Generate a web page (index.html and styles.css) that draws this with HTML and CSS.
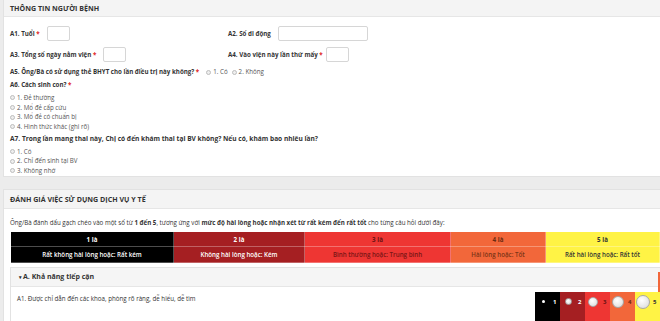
FILE: index.html
```html
<!DOCTYPE html>
<html lang="vi">
<head>
<meta charset="UTF-8">
<meta name="viewport" content="width=device-width, initial-scale=1.0">
<title>Khảo sát hài lòng người bệnh</title>
<link rel="stylesheet" href="styles.css">
</head>
<body>
    <div class="page">
        <div class="panel">
            <div class="panel-heading">THÔNG TIN NGƯỜI BỆNH</div>
            <div class="panel-body">
                <div class="field-grid">
                    <div class="field">
                        <label>A1. Tuổi <span class="req">*</span></label>
                        <input type="text" class="input-xs">
                    </div>
                    <div class="field">
                        <label>A2. Số di động</label>
                        <input type="text" class="input-lg">
                    </div>
                    <div class="field">
                        <label>A3. Tổng số ngày nằm viện <span class="req">*</span></label>
                        <input type="text" class="input-xs">
                    </div>
                    <div class="field narrow">
                        <label>A4. Vào viện này lần thứ mấy <span class="req">*</span></label>
                        <input type="text" class="input-xs">
                    </div>
                </div>

                <div class="question inline">
                    <label>A5. Ông/Bà có sử dụng thẻ BHYT cho lần điều trị này không? <span class="req">*</span></label>
                    <span class="opt"><i class="radio"></i>1. Có</span>
                    <span class="opt"><i class="radio"></i>2. Không</span>
                </div>

                <div class="question">
                    <label>A6. Cách sinh con? <span class="req">*</span></label>
                    <div class="opt-list">
                        <span class="opt"><i class="radio"></i>1. Đẻ thường</span>
                        <span class="opt"><i class="radio"></i>2. Mổ đẻ cấp cứu</span>
                        <span class="opt"><i class="radio"></i>3. Mổ đẻ có chuẩn bị</span>
                        <span class="opt"><i class="radio"></i>4. Hình thức khác (ghi rõ)</span>
                    </div>
                </div>

                <div class="question tight">
                    <label class="wide">A7. Trong lần mang thai này, Chị có đến khám thai tại BV không? Nếu có, khám bao nhiêu lần?</label>
                    <div class="opt-list spaced">
                        <span class="opt"><i class="radio"></i>1. Có</span>
                        <span class="opt"><i class="radio"></i>2. Chỉ đến sinh tại BV</span>
                        <span class="opt"><i class="radio"></i>3. Không nhớ</span>
                    </div>
                </div>
            </div>
        </div>

        <div class="panel panel-second">
            <div class="panel-heading tall">ĐÁNH GIÁ VIỆC SỬ DỤNG DỊCH VỤ Y TẾ</div>
            <div class="panel-body second">
                <p class="intro">Ông/Bà đánh dấu gạch chéo vào một số từ <b>1 đến 5</b>, tương ứng với <b>mức độ hài lòng hoặc nhận xét từ rất kém đến rất tốt</b> cho từng câu hỏi dưới đây:</p>

                <table class="scale">
                    <tr class="scale-head">
                        <td class="lv1">1 là</td>
                        <td class="lv2">2 là</td>
                        <td class="lv3">3 là</td>
                        <td class="lv4">4 là</td>
                        <td class="lv5">5 là</td>
                    </tr>
                    <tr class="scale-desc">
                        <td class="lv1">Rất không hài lòng hoặc: Rất kém</td>
                        <td class="lv2">Không hài lòng hoặc: Kém</td>
                        <td class="lv3">Bình thường hoặc: Trung bình</td>
                        <td class="lv4">Hài lòng hoặc: Tốt</td>
                        <td class="lv5">Rất hài lòng hoặc: Rất tốt</td>
                    </tr>
                </table>

                <div class="group">
                    <div class="group-heading"><span class="caret">▾</span>A. Khả năng tiếp cận</div>
                    <div class="group-row">
                        <div class="group-q">A1. Được chỉ dẫn đến các khoa, phòng rõ ràng, dễ hiểu, dễ tìm</div>
                        <div class="rating">
                            <span class="rate lv1"><i class="dot s1"></i>1</span>
                            <span class="rate lv2"><i class="dot s2"></i>2</span>
                            <span class="rate lv3"><i class="dot s3"></i>3</span>
                            <span class="rate lv4"><i class="dot s4"></i>4</span>
                            <span class="rate lv5"><i class="dot s5"></i>5</span>
                        </div>
                    </div>
                </div>
            </div>
        </div>
    </div>
</body>
</html>
```

FILE: styles.css
```css
html, body {
  overflow: hidden;
}
body {
  margin: 0;
  background-color: #ececec;
  font-family: "Open Sans", "Noto Sans", sans-serif;
  font-size: 6.2px;
  color: #333;
}
.page {
  width: 690px;
  padding-left: 3px;
}
.panel {
  background-color: #fff;
  border: 1px solid #e2e2e2;
  border-top: none;
}
.panel-second {
  margin-top: 12px;
  border-top: 1px solid #e2e2e2;
}
.panel-heading {
  height: 16px;
  line-height: 16px;
  padding-left: 6px;
  background-color: #f4f4f4;
  border-bottom: 1px solid #e6e6e6;
  font-size: 7.1px;
  font-weight: 700;
  color: #333;
}
.panel-heading.tall {
  height: 18px;
  line-height: 19px;
}
.panel-body {
  padding: 9px 6px 1px 6px;
}
.panel-body.second {
  padding-top: 8px;
}
label {
  font-weight: 700;
  color: #333;
}
label.wide {
  font-size: 6.6px;
}
.req {
  color: #e02222;
}
.field-grid {
  display: grid;
  grid-template-columns: 218px 1fr;
  row-gap: 6px;
}
.field {
  display: flex;
  align-items: center;
  gap: 7px;
}
.field.narrow {
  gap: 3px;
}
input {
  box-sizing: border-box;
  height: 15px;
  border: 1px solid #d6d6d6;
  border-radius: 2px;
  background: #fff;
  margin: 0;
  padding: 0 3px;
  font-size: 6px;
}
.input-xs {
  width: 23px;
}
.input-lg {
  width: 90px;
}
.question {
  margin-top: 3px;
  line-height: 10px;
}
.question.tight {
  margin-top: 2px;
}
.question.inline {
  margin-top: 5px;
  display: flex;
  align-items: center;
  gap: 4px;
}
.question.inline label {
  margin-right: 3px;
}
.opt {
  display: flex;
  align-items: center;
  gap: 2px;
  color: #555;
}
.opt-list {
  display: flex;
  flex-direction: column;
  margin-top: 3px;
  line-height: 9.7px;
}
.opt-list.spaced {
  margin-top: 3px;
  line-height: 9.5px;
}
.radio {
  display: inline-block;
  box-sizing: border-box;
  width: 5px;
  height: 5px;
  border: 1px solid #bdbdbd;
  border-radius: 50%;
  background-color: #eee;
}
.intro {
  margin: 1px 0 3px 0;
  line-height: 10px;
}
.scale {
  width: 650px;
  border-collapse: collapse;
  table-layout: fixed;
}
.scale td {
  text-align: center;
  border: 1px solid rgba(255, 255, 255, 0.3);
  padding: 0;
}
.scale td:nth-child(1) { width: 162px; }
.scale td:nth-child(2) { width: 130px; }
.scale td:nth-child(3) { width: 145px; }
.scale td:nth-child(4) { width: 94px; }
.scale-head td {
  height: 14px;
  font-weight: 700;
}
.scale-desc td {
  height: 15px;
  font-weight: 600;
}
.lv1 { background-color: #000; color: #fff; }
.lv2 { background-color: #a51f22; color: #fff; }
.lv3 { background-color: #ee3633; color: #6b1212; }
.lv4 { background-color: #f2673a; color: #6a2a10; }
.lv5 { background-color: #fff345; color: #333; }
.scale-desc .lv3 { color: #7a1515; }
.scale-desc .lv4 { color: #7c3416; }
.group {
  position: relative;
  margin-top: 4px;
  border: 1px solid #e2e2e2;
}
/* thanh cam nhỏ ở mép phải */
.group::after {
  content: "";
  position: absolute;
  left: 647px;
  top: 4px;
  width: 2px;
  height: 20px;
  background-color: #f2673a;
}
.group-heading {
  height: 18px;
  line-height: 18px;
  padding-left: 8px;
  background-color: #f5f5f5;
  border-bottom: 1px solid #e6e6e6;
  font-size: 7px;
  font-weight: 700;
}
.caret {
  font-size: 5px;
  margin-right: 1px;
}
.group-row {
  display: grid;
  grid-template-columns: 518px 140px;
  padding-left: 6px;
  height: 40px;
}
.group-q {
  padding-top: 7px;
  line-height: 10px;
  color: #333;
}
.rating {
  display: flex;
  margin-top: 5px;
}
.rate {
  display: flex;
  align-items: flex-start;
  width: 25px;
  padding-top: 3px;
  font-weight: 700;
  font-size: 6px;
  line-height: 14px;
}
.rate.lv5 {
  width: 30px;
}
.dot {
  display: flex;
  justify-content: center;
  width: 16px;
  margin-right: 2px;
}
.dot::before {
  content: "";
  box-sizing: border-box;
  border-radius: 50%;
  background: radial-gradient(circle at 40% 35%, #fff, #d8d8d8);
  border: 1px solid #a8a8a8;
}
.s1::before { width: 3px; height: 3px; margin-top: 5px; background: #fff; border: none; }
.s2::before { width: 7px; height: 7px; margin-top: 3px; }
.s3::before { width: 10px; height: 10px; margin-top: 2px; }
.s4::before { width: 12px; height: 12px; margin-top: 1px; }
.s5::before { width: 14px; height: 14px; }
```
